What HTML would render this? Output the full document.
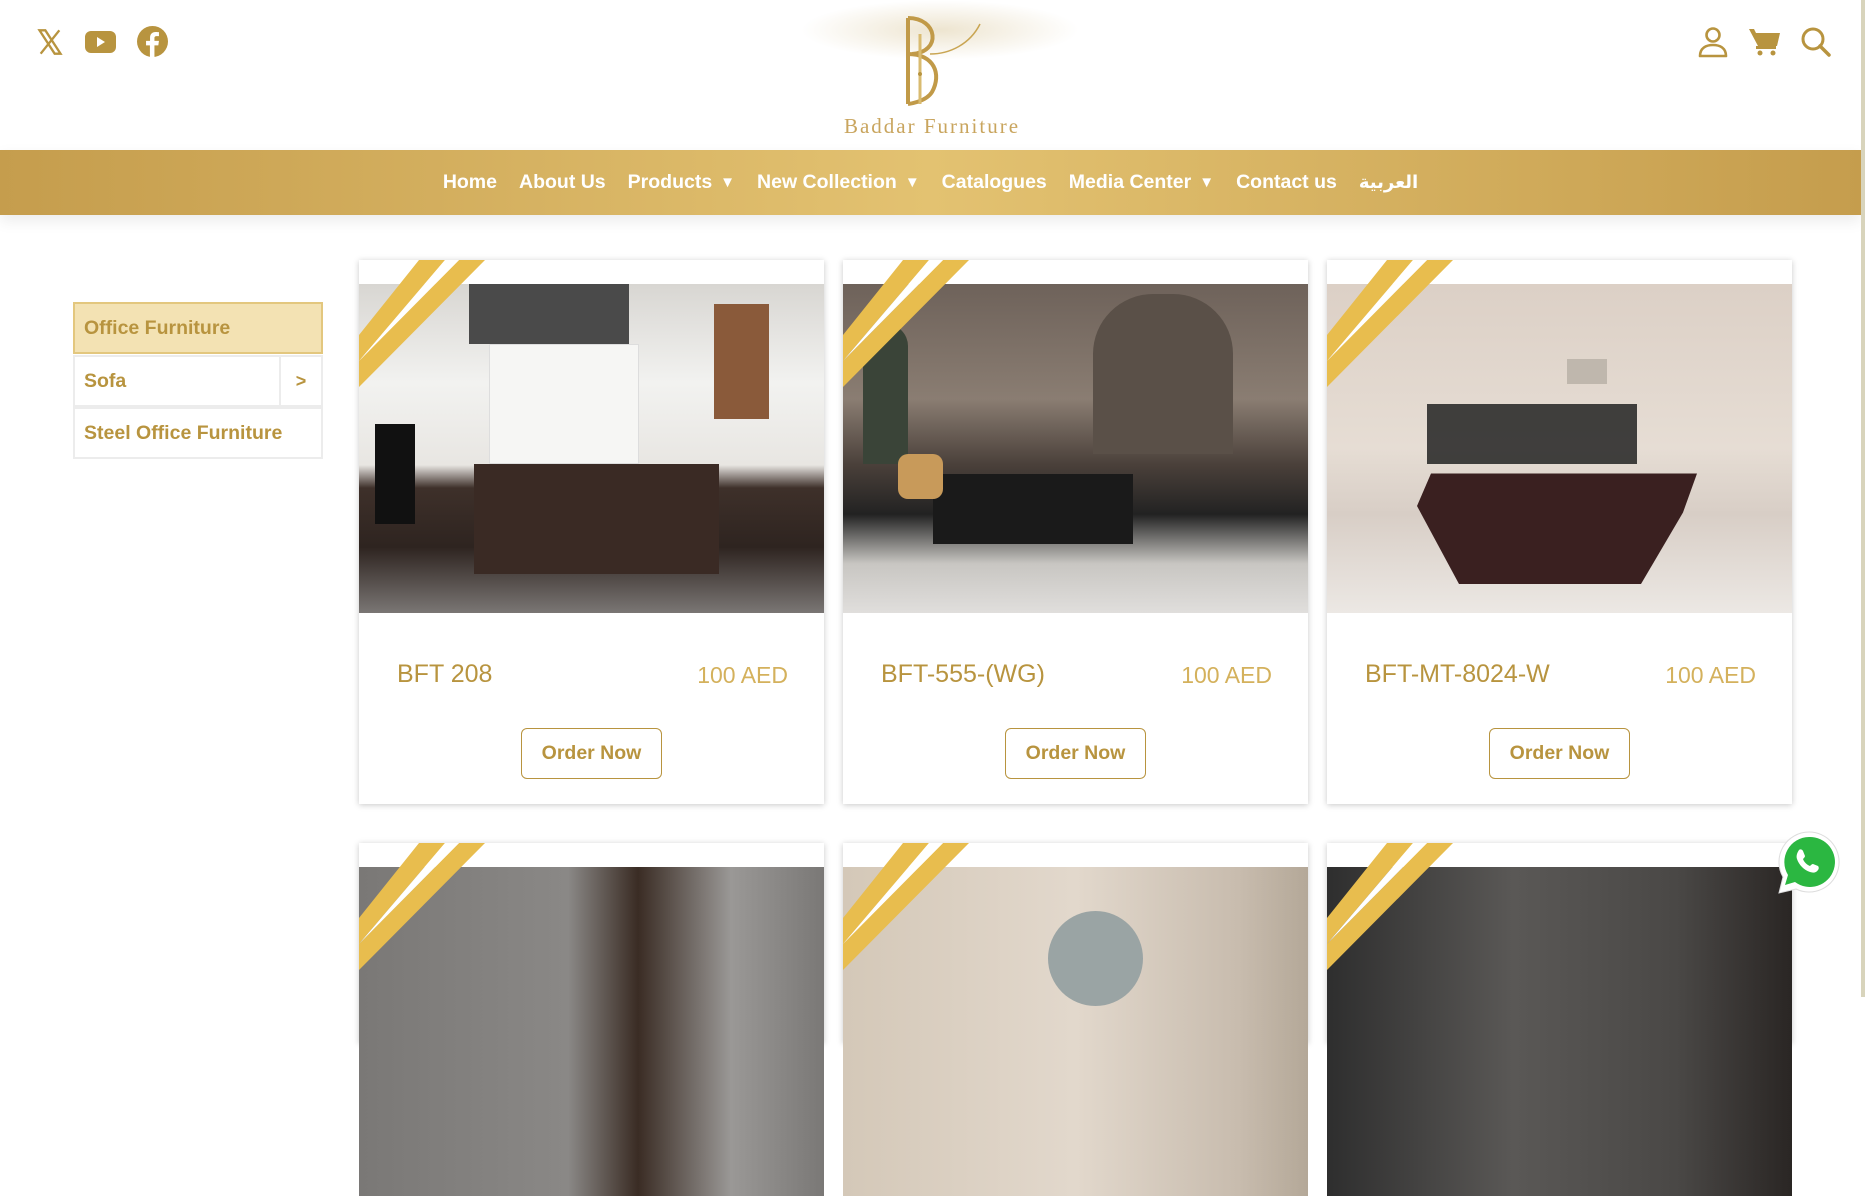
<!DOCTYPE html>
<html><head><meta charset="utf-8"><style>
*{box-sizing:border-box;margin:0;padding:0}
body{width:1865px;height:997px;overflow:hidden;background:#fff;font-family:"Liberation Sans",sans-serif;position:relative}
.hdr{position:absolute;left:0;top:0;width:1865px;height:150px;background:#fff}
.nav{position:absolute;left:0;top:150px;width:1861px;height:65px;background:linear-gradient(90deg,#c59d4d 0%,#e3c271 50%,#c59d4d 100%);box-shadow:0 6px 14px rgba(0,0,0,.08);text-align:center;font-size:19.5px;font-weight:bold;color:#fff;line-height:65px;white-space:nowrap}
.nav span{margin:0 11px}
.nav i{font-style:normal;font-size:15px;margin-left:8px;position:relative;top:-1px}
.sbar{position:absolute;right:0;top:0;width:4px;height:997px;background:#d8d4bc}
.side{position:absolute;left:73px;width:250px;border:2px solid #ececec;font-size:19.5px;font-weight:bold;color:#b8943f;padding-left:9px;display:flex;align-items:center}
.card{position:absolute;width:465px;background:#fff;box-shadow:0 1px 6px rgba(0,0,0,.22)}
.img{position:absolute;left:0;right:0;top:24px;height:329px;overflow:hidden}
.stripe{position:absolute;left:0;top:0;width:130px;height:130px;overflow:hidden}
.t{position:absolute;top:400px;left:38px;font-size:25px;color:#b8943f}
.p{position:absolute;top:402px;right:36px;font-size:23px;color:#d4b15c}
.btn{position:absolute;left:162px;top:468px;width:141px;height:51px;border:1.5px solid #b8943f;border-radius:6px;color:#b8943f;font-size:19.5px;font-weight:bold;text-align:center;line-height:48px}
</style></head><body>
<div class="hdr">
<svg style="position:absolute;left:36px;top:28px" width="28" height="28" viewBox="0 0 24 24"><path d="M3 2h5l13 20h-5z M20 2L4 22" stroke="#b8943f" stroke-width="2" fill="none"/></svg>
<svg style="position:absolute;left:85px;top:30px" width="31" height="24" viewBox="0 0 31 24"><rect x="0" y="1" width="31" height="22" rx="6" fill="#b8943f"/><path d="M12 7v10l8-5z" fill="#fff"/></svg>
<svg style="position:absolute;left:137px;top:26px" width="31" height="31" viewBox="0 0 24 24"><circle cx="12" cy="12" r="12" fill="#b8943f"/><path d="M13.5 24v-9h3l.5-3.5h-3.5V9.5c0-1 .3-1.7 1.8-1.7H17V4.7c-.3 0-1.4-.1-2.6-.1-2.6 0-4.3 1.6-4.3 4.4v2.5H7V15h3v9z" fill="#fff"/></svg>
<div style="position:absolute;left:800px;top:0;width:280px;height:60px;background:radial-gradient(ellipse at center,rgba(205,180,120,.35),rgba(255,255,255,0) 70%)"></div>
<svg style="position:absolute;left:880px;top:14px" width="110" height="92" viewBox="0 0 110 92"><path d="M28 4v86 M28 4c30 0 34 34 4 36 M28 40c26 0 34 20 24 38 c-6 10-24 12-24 12" stroke="#c19a48" stroke-width="4" fill="none"/><path d="M40 20c0 50 0 60 0 70" stroke="#d9bb70" stroke-width="3" fill="none"/><path d="M50 40c20 0 40-10 50-30" stroke="#c9a552" stroke-width="1.5" fill="none"/><circle cx="40" cy="60" r="2" fill="#b8943f"/></svg>
<div style="position:absolute;left:832px;top:114px;width:200px;text-align:center;font-family:'Liberation Serif',serif;font-size:21px;letter-spacing:2px;color:#c9a55e">Baddar Furniture</div>
<svg style="position:absolute;left:1698px;top:26px" width="30" height="32" viewBox="0 0 30 32"><circle cx="15" cy="9" r="6.5" stroke="#b8943f" stroke-width="2.6" fill="none"/><path d="M2 30c0-8 6-11 13-11s13 3 13 11z" stroke="#b8943f" stroke-width="2.6" fill="none" stroke-linejoin="round"/></svg>
<svg style="position:absolute;left:1748px;top:27px" width="33" height="30" viewBox="0 0 33 30"><path d="M1 2h5l2 4h24l-3 13H10z" fill="#b8943f"/><rect x="8" y="19" width="20" height="3" fill="#b8943f"/><circle cx="12" cy="26" r="2.5" fill="#b8943f"/><circle cx="25" cy="26" r="2.5" fill="#b8943f"/></svg>
<svg style="position:absolute;left:1800px;top:26px" width="32" height="32" viewBox="0 0 32 32"><circle cx="13" cy="13" r="10" stroke="#b8943f" stroke-width="3" fill="none"/><path d="M20 20l9 9" stroke="#b8943f" stroke-width="3.5" stroke-linecap="round"/></svg>
</div>
<div class="nav"><span>Home</span><span>About Us</span><span>Products<i>▼</i></span><span>New Collection<i>▼</i></span><span>Catalogues</span><span>Media Center<i>▼</i></span><span>Contact us</span><span style="font-family:'DejaVu Sans',sans-serif;font-size:18px">العربية</span></div>
<div class="sbar"></div>

<div class="side" style="top:302px;height:52px;background:#f3e2b3;border-color:#e3c77e">Office Furniture</div>
<div class="side" style="top:355px;height:52px">Sofa<div style="position:absolute;right:0;top:0;width:42px;height:48px;border-left:2px solid #ececec;text-align:center;line-height:48px;font-size:18px">&gt;</div></div>
<div class="side" style="top:407px;height:52px">Steel Office Furniture</div>

<!-- row 1 -->
<div class="card" style="left:359px;top:260px;height:544px">
<div class="img" style="background:linear-gradient(180deg,#d8d6d2 0%,#f2f2f0 30%,#e8e6e2 55%,#3e302a 62%,#2e2420 80%,#7a7674 100%)"><div style="position:absolute;left:110px;top:0;width:160px;height:60px;background:#4a4a4a"></div><div style="position:absolute;left:130px;top:60px;width:150px;height:120px;background:#f6f6f4;border:1px solid #ddd"></div><div style="position:absolute;left:355px;top:20px;width:55px;height:115px;background:#8a5a3a"></div><div style="position:absolute;left:16px;top:140px;width:40px;height:100px;background:#111"></div><div style="position:absolute;left:115px;top:180px;width:245px;height:110px;background:#3a2a24"></div></div>
<svg class="stripe" viewBox="0 0 130 130"><path d="M0 75L60 0h26L0 101z M0 101L100 0h26L0 127z" fill="#e8bd4e"/><path d="M0 101L86 0h14L0 101z" fill="#fff"/></svg>
<div class="t">BFT 208</div><div class="p">100 AED</div><div class="btn">Order Now</div></div>

<div class="card" style="left:843px;top:260px;height:544px">
<div class="img" style="background:linear-gradient(180deg,#6e625a 0%,#8a7d72 35%,#4a403a 55%,#222 70%,#c8c6c2 85%,#e0dedc 100%)"><div style="position:absolute;left:20px;top:40px;width:45px;height:140px;border-radius:22px 22px 0 0;background:#3a4438"></div><div style="position:absolute;left:250px;top:10px;width:140px;height:160px;background:#5a5048;border-radius:60px 60px 0 0"></div><div style="position:absolute;left:90px;top:190px;width:200px;height:70px;background:#1a1a1a"></div><div style="position:absolute;left:55px;top:170px;width:45px;height:45px;background:#c89a5a;border-radius:10px"></div></div>
<svg class="stripe" viewBox="0 0 130 130"><path d="M0 75L60 0h26L0 101z M0 101L100 0h26L0 127z" fill="#e8bd4e"/><path d="M0 101L86 0h14L0 101z" fill="#fff"/></svg>
<div class="t">BFT-555-(WG)</div><div class="p">100 AED</div><div class="btn">Order Now</div></div>

<div class="card" style="left:1327px;top:260px;height:544px">
<div class="img" style="background:linear-gradient(180deg,#dcd0c6 0%,#e6ddd4 50%,#d8cec6 70%,#ece8e4 100%)"><div style="position:absolute;left:90px;top:170px;width:280px;height:130px;background:#3a2020;clip-path:polygon(5% 15%,100% 15%,95% 45%,80% 100%,15% 100%,0 40%)"></div><div style="position:absolute;left:100px;top:120px;width:210px;height:60px;background:#222;opacity:.85"></div><div style="position:absolute;left:240px;top:75px;width:40px;height:25px;background:#bfb7ad"></div></div>
<svg class="stripe" viewBox="0 0 130 130"><path d="M0 75L60 0h26L0 101z M0 101L100 0h26L0 127z" fill="#e8bd4e"/><path d="M0 101L86 0h14L0 101z" fill="#fff"/></svg>
<div class="t">BFT-MT-8024-W</div><div class="p">100 AED</div><div class="btn">Order Now</div></div>

<!-- row 2 -->
<div class="card" style="left:359px;top:843px;height:200px"><div class="img" style="background:linear-gradient(90deg,#7a7876,#8a8886 45%,#3a2c24 60%,#9a9896 80%,#7a7876)"></div><svg class="stripe" viewBox="0 0 130 130"><path d="M0 75L60 0h26L0 101z M0 101L100 0h26L0 127z" fill="#e8bd4e"/><path d="M0 101L86 0h14L0 101z" fill="#fff"/></svg></div>
<div class="card" style="left:843px;top:843px;height:200px"><div class="img" style="background:linear-gradient(90deg,#d4c8b8,#e2d8cc 50%,#c8bcae 85%,#b4a898)"><div style="position:absolute;left:205px;top:44px;width:95px;height:95px;border-radius:50%;background:#9aa4a4"></div></div><svg class="stripe" viewBox="0 0 130 130"><path d="M0 75L60 0h26L0 101z M0 101L100 0h26L0 127z" fill="#e8bd4e"/><path d="M0 101L86 0h14L0 101z" fill="#fff"/></svg></div>
<div class="card" style="left:1327px;top:843px;height:200px"><div class="img" style="background:linear-gradient(90deg,#2e2e2e,#5a5856 40%,#4a4846 75%,#2a2624)"></div><svg class="stripe" viewBox="0 0 130 130"><path d="M0 75L60 0h26L0 101z M0 101L100 0h26L0 127z" fill="#e8bd4e"/><path d="M0 101L86 0h14L0 101z" fill="#fff"/></svg></div>

<svg style="position:absolute;left:1774px;top:828px" width="70" height="70" viewBox="0 0 70 70"><path d="M35 4a30 30 0 0 0-26 45L5 65l17-4A30 30 0 1 0 35 4z" fill="#fff" stroke="#ddd"/><path d="M35 9a25 25 0 0 0-21 38l-3 10 10-3A25 25 0 1 0 35 9z" fill="#2bb741"/><path d="M25 22c1-1 3-1 4 1l2 5c0 1-1 2-2 3 1 3 4 6 7 7 1-1 2-2 3-2l5 2c1 1 1 3 0 4-2 3-5 3-8 2-6-2-11-7-13-13-1-3 0-6 2-9z" fill="#fff"/></svg>
</body></html>
